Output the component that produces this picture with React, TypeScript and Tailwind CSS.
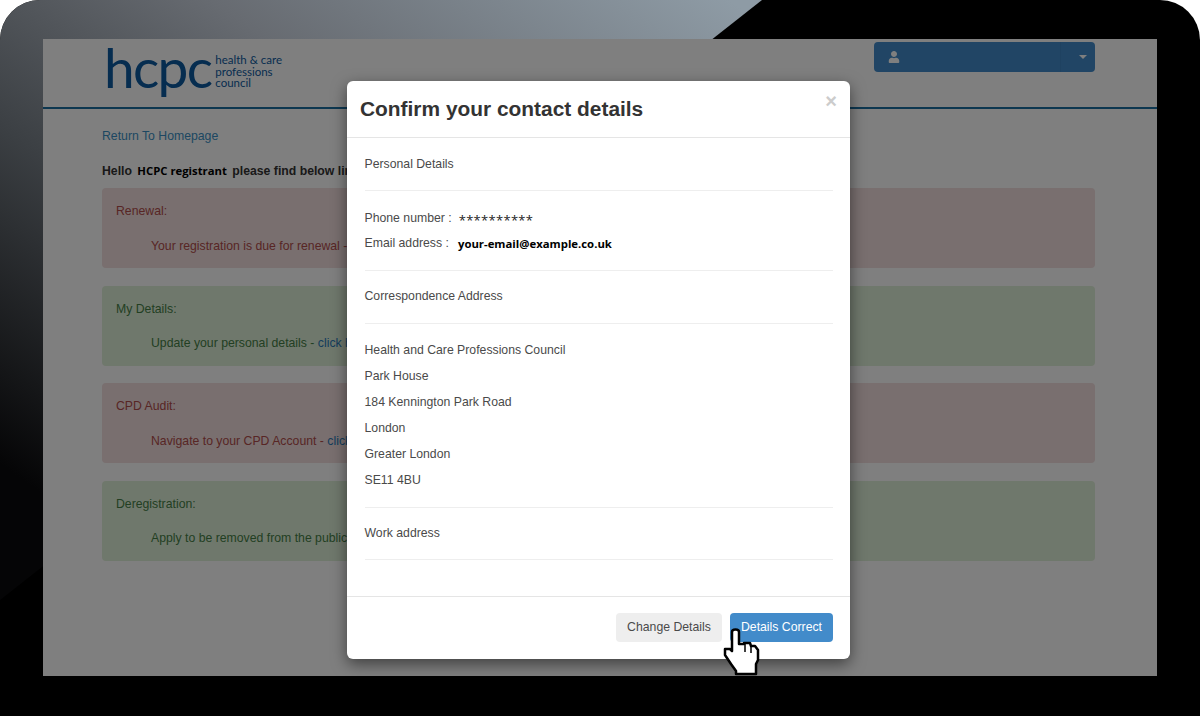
import React from 'react';
import { FaUser } from 'react-icons/fa';

const sans = "font-['Liberation_Sans',Arial,sans-serif]";
const humanist = "font-['Open_Sans',sans-serif]";

const Alert = ({ kind, title, children }: { kind: 'red' | 'green'; title: string; children: React.ReactNode }) => {
  const tone = kind === 'red'
    ? 'bg-[#f2dede] text-[#b04c4a]'
    : 'bg-[#dff0d8] text-[#457f46]';
  return (
    <div className={`h-[80px] rounded px-[14px] pt-[14px] ${tone}`}>
      <p className="leading-[18px]">{title}</p>
      <p className="mt-[16.5px] pl-[35px] leading-[18px]">{children}</p>
    </div>
  );
};

const Row = ({ children }: { children: React.ReactNode }) => (
  <div className="h-[26px] leading-[25px]">{children}</div>
);

const Rule = () => <div className="h-px bg-[#eeeeee]" />;

const HandCursor = () => (
  <svg width="38" height="48" viewBox="0 0 38 48" className="absolute left-[723px] top-[628px]">
    <path
      d="M9 4 Q9 1.5 12.5 1.5 Q16 1.5 16 4 V16 H21 V15 H27 L28 18 H32 L35 22 V32 L33 36 V46 H13 V43 L8 36 L2 27 V21 H7 L9 23 Z"
      fill="#fff"
      stroke="#000"
      strokeWidth="2.5"
      strokeLinejoin="round"
    />
    <path d="M22 16 V24 M28 18 V25" stroke="#000" strokeWidth="1.5" fill="none" />
  </svg>
);

const App = () => {
  return (
    <div className="h-[716px] w-[1200px] overflow-hidden bg-white">
      <div className={`relative h-[716px] w-[1200px] overflow-hidden rounded-t-[40px] bg-black pl-[43px] pt-[39px] ${sans}`}>
        <div className="absolute left-0 top-0 h-[600px] w-[762px] bg-[linear-gradient(35deg,#050506_12%,#3c4044_42%,#676b71_66%,#8e9ba5_98%)] [clip-path:polygon(0_0,100%_0,0_100%)]" />

        <div className="relative h-[637px] w-[1114px] overflow-hidden bg-white text-[12.25px] text-[#333333]">
          <header className="flex h-[70px] border-b-2 border-[#1a6ea0] pl-[61px]">
            <div className="flex h-[68px] items-start text-[#0d5aa0]">
              <span className="font-['Lato',sans-serif] text-[55px] font-normal leading-[56px] tracking-[-1.7px]">hcpc</span>
              <span className="ml-[4px] mt-[15px] font-['Lato',sans-serif] text-[11.5px] leading-[11.5px]">
                health &amp; care<br />professions<br />council
              </span>
            </div>
            <div className="ml-auto mr-[62.5px] mt-[3px] flex h-[30px] w-[221px] rounded bg-[#428bca] text-white">
              <div className="flex flex-1 items-center border-r border-[#3f85c2] pl-[14px]">
                <FaUser size={12} />
              </div>
              <div className="flex w-[34px] items-center justify-end pr-[8px]">
                <span className="h-0 w-0 border-x-4 border-t-4 border-x-transparent border-t-white" />
              </div>
            </div>
          </header>

          <main className="pl-[59px] pr-[62.5px]">
            <a className="mt-[18px] block leading-[18px] text-[#3a8fc4]">Return To Homepage</a>
            <p className="mt-[17px] text-[12.25px] font-bold leading-[18px]">
              Hello <b className={`ml-[2px] mr-[2px] text-[11.3px] font-bold text-black ${humanist}`}>HCPC registrant</b> please find below links
            </p>
            <div className="mt-[8px] flex flex-col gap-[17.67px]">
              <Alert kind="red" title="Renewal:">Your registration is due for renewal - click here</Alert>
              <Alert kind="green" title="My Details:">Update your personal details - <b className="font-normal text-[#2a7ab8]">click here</b></Alert>
              <Alert kind="red" title="CPD Audit:">Navigate to your CPD Account - <b className="font-normal text-[#2a7ab8]">click here</b></Alert>
              <Alert kind="green" title="Deregistration:">Apply to be removed from the public register</Alert>
            </div>
          </main>

          <div className="absolute inset-0 bg-black/50" />
        </div>

        <div className="absolute left-[347px] top-[81px] flex h-[578px] w-[503px] flex-col rounded-md bg-white text-[12.25px] text-[#4a4a4a] shadow-[0_5px_15px_rgba(0,0,0,0.5)]">
          <div className="relative h-[57px] border-b border-[#e5e5e5] pl-[13px] pt-[14px]">
            <h4 className="text-[20.9px] font-bold leading-[28px] text-[#333333]">Confirm your contact details</h4>
            <span className="absolute right-[13px] top-[8px] text-[20px] font-bold leading-[24px] text-[#cccccc]">×</span>
          </div>
          <div className="flex-1 px-[17.5px] pt-[13px]">
            <div className="h-[26px] leading-[26px]">Personal Details</div>
            <div className="mt-[13px]"><Rule /></div>
            <div className="mt-[15px] flex h-[25px] items-center">
              Phone number :<span className={`ml-[7px] pt-[4px] text-[13px] tracking-[0.3px] text-[#222222] ${humanist}`}>**********</span>
            </div>
            <div className="flex h-[25px] items-center">
              Email address :<b className={`ml-[9px] text-[11.35px] font-bold text-black ${humanist}`}>your-email@example.co.uk</b>
            </div>
            <div className="mt-[14px]"><Rule /></div>
            <div className="mt-[13px]"><Row>Correspondence Address</Row></div>
            <div className="mt-[13px]"><Rule /></div>
            <div className="mt-[14px]">
              <Row>Health and Care Professions Council</Row>
              <Row>Park House</Row>
              <Row>184 Kennington Park Road</Row>
              <Row>London</Row>
              <Row>Greater London</Row>
              <Row>SE11 4BU</Row>
            </div>
            <div className="mt-[13px]"><Rule /></div>
            <div className="mt-[13px]"><Row>Work address</Row></div>
            <div className="mt-[12px]"><Rule /></div>
          </div>
          <div className="flex h-[63px] items-start justify-end gap-2 border-t border-[#e5e5e5] pr-[17px] pt-[16px]">
            <button className="h-[29px] w-[106px] rounded bg-[#eeeeee] text-[12.25px] text-[#4a4a4a]">Change Details</button>
            <button className="h-[29px] w-[103px] rounded bg-[#428bca] text-[12.25px] text-white">Details Correct</button>
          </div>
        </div>

        <HandCursor />
      </div>
    </div>
  );
};

export default App;
